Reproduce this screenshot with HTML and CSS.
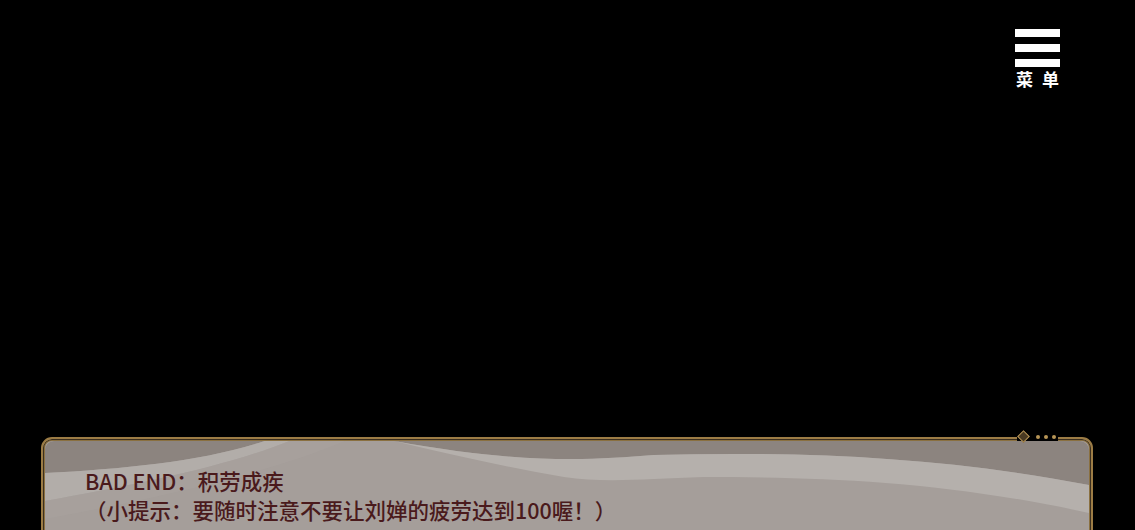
FILE: index.html
```html
<!DOCTYPE html>
<html lang="zh-CN">
<head>
  <meta charset="UTF-8" />
  <title>BAD END</title>
  <link rel="stylesheet" href="styles.css">
</head>
<body>
  <div class="stage">
    <div class="top">
      <div class="menu">
        <span class="bar"></span>
        <span class="bar"></span>
        <span class="bar"></span>
        <span class="menu-label">菜单</span>
      </div>
    </div>

    <div class="dialog">
      <svg class="waves" viewBox="0 0 1046 130" preserveAspectRatio="none">
        <rect x="0" y="0" width="1046" height="130" fill="#a59e9a" />
        <!-- faixa escura do topo -->
        <path d="M0 0 L1046 0 L1046 44 C900 16 760 10 610 14 C540 20 470 22 350 0 L220 0 C160 20 80 28 0 32 Z" fill="#8c847f" />
        <!-- onda clara da esquerda -->
        <path d="M0 32 C80 28 160 20 220 0 L245 0 C180 26 90 44 0 60 Z" fill="#b2ada9" />
        <!-- onda clara do meio/direita -->
        <path d="M350 0 C470 22 540 20 610 14 C760 10 900 16 1046 44 L1046 72 C900 40 780 36 660 36 C600 38 560 42 520 36 C460 26 400 12 350 0 Z" fill="#b5b0ac" />
        <path d="M0 60 C90 44 180 26 245 0 L300 0 C230 30 120 56 0 78 Z" fill="#a9a29e" opacity="0.6" />
      </svg>
      <div class="ornament">
        <span class="diamond"></span>
        <span class="dot"></span>
        <span class="dot"></span>
        <span class="dot"></span>
      </div>
      <div class="dialog-text">
        <p>BAD END：积劳成疾</p>
        <p>（小提示：要随时注意不要让刘婵的疲劳达到100喔！）</p>
      </div>
    </div>
  </div>
</body>
</html>
```

FILE: styles.css
```css
body {
  margin: 0;
  padding: 0;
  background: #000;
  font-family: 'Noto Sans CJK SC', 'Noto Sans', sans-serif;
  overflow: hidden;
}
.stage {
  height: 530px;
  display: flex;
  flex-direction: column;
  overflow: hidden;
}
.top {
  display: flex;
  justify-content: flex-end;
  padding: 29px 75px 0 0;
}
.menu {
  width: 45px;
  display: flex;
  flex-direction: column;
  align-items: center;
  gap: 7px;
}
.bar {
  display: block;
  width: 45px;
  height: 8px;
  background: #fff;
}
.menu-label {
  color: #fff;
  font-size: 17px;
  font-weight: bold;
  letter-spacing: 9px;
  margin-right: -9px;
  line-height: 18px;
  margin-top: -4px;
}
.dialog {
  position: relative;
  margin: auto 42px 0 41px;
  height: 140px;
  margin-bottom: -51px;
  background: #a59e9a;
  border: 2px solid #9c7c45;
  border-radius: 11px;
  box-shadow: inset 0 0 0 1px #3a2e1e, inset 0 0 0 2px #8a7040;
}
.waves {
  position: absolute;
  left: 2px;
  top: 2px;
  width: calc(100% - 4px);
  height: 130px;
  border-radius: 9px 9px 0 0;
}
.ornament {
  position: absolute;
  top: -7px;
  right: 33px;
  display: flex;
  align-items: center;
  gap: 4px;
  background: #000;
  padding: 0 2px;
}
.diamond {
  width: 7px;
  height: 7px;
  border: 1.5px solid #b79556;
  background: #4a3a22;
  transform: rotate(45deg);
  margin-right: 4px;
}
.dot {
  width: 4px;
  height: 4px;
  border-radius: 50%;
  background: #b79556;
}
.dialog-text {
  position: relative;
  padding: 27px 0 0 42px;
  color: #4a1a1c;
  font-size: 21.5px;
  font-weight: 500;
  line-height: 29px;
}
.dialog-text p {
  margin: 0;
}
```
